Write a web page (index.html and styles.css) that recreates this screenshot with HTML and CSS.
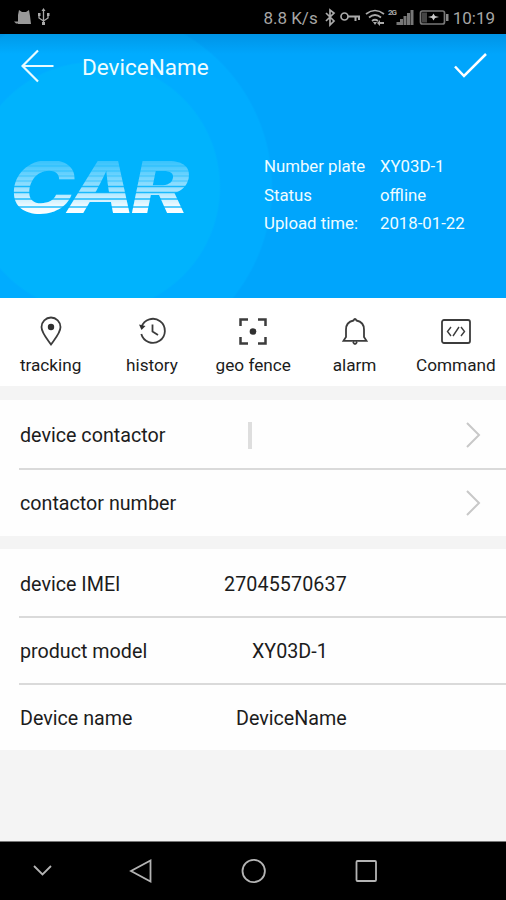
FILE: index.html
```html
<!DOCTYPE html>
<html lang="en">
<head>
<meta charset="utf-8">
<title>DeviceName</title>
<link rel="stylesheet" href="styles.css">
</head>
<body>
<div class="status">
  <svg class="status-left" width="38" height="20" viewBox="0 0 38 20">
    <path fill="#999" d="M4 17V8L5 3l3 2h4l3-2 1 6 1 8zM0 14.500h5v2H2z"/>
    <g fill="none" stroke="#aaa" stroke-width="1.3"><path d="M29.500 3v14M25 7v4l4.500 3 4.500-3V7"/></g>
    <path fill="#aaa" d="M27.500 4l2-3 2 3zM28 15h3v3h-3zM24 6h2.500v3H24zM33 6h2.500v3H33z"/>
  </svg>
  <span class="speed">8.8 K/s</span>
  <svg class="status-right" width="126" height="22" viewBox="0 0 126 22">
    <g fill="none" stroke="#aaa" stroke-width="1.700">
      <path d="M1 7l8 8-4 4V4l4 3-8 8"/>
      <circle cx="19.500" cy="10.500" r="3.500"/><path stroke-width="2" d="M23 10.500h12M30.500 11v4M34 11v3"/>
      <path d="M41 8q9-7 18 0M44 11.500q6-5 12 0M47 15q3-2.500 6 0"/>
    </g>
    <path fill="#aaa" d="M48 16h4l-2 3zM52 17l3-3v2h4v2h-4v2z"/>
    <text class="network" x="63" y="9" textLength="9">2G</text>
    <path fill="#777" d="M71.500 19v-3H75v3zM75 19v-6h3v6zM78.500 19v-9h3v9zM82 19V7h3v12zM85.500 19V4H88.500v15z"/>
    <rect x="95.500" y="5" width="24" height="13" rx="2" fill="none" stroke="#777" stroke-width="1.700"/>
    <path fill="#444" d="M97 6.500h5v10h-5z"/><path fill="#8a8a8a" d="M121 8h2.500v7H121z"/>
    <path fill="#ccc" d="M103 11l4-1 1.500-2.500 1.500 2.500 4 1-4 1-1.500 2.500-1.500-2.500z"/>
  </svg>
  <span class="clock">10:19</span>
</div>

<header class="hero">
  <div class="bar">
    <svg width="34" height="34" viewBox="0 0 34 34" fill="none" stroke="#e9fbff" stroke-width="2.200"><path d="M17 1.500L1.500 17 17 32.500M1.500 17H32.500"/></svg>
    <h1>DeviceName</h1>
    <svg width="34" height="28" viewBox="0 0 34 28" fill="none" stroke="#fff" stroke-width="2.500"><path d="M2 14.500l9 9.500L33 2"/></svg>
  </div>
  <div class="summary">
    <svg class="logo" width="180" height="54" viewBox="0 0 180 54">
      <defs>
        <linearGradient id="fade" gradientUnits="userSpaceOnUse" x1="0" y1="0" x2="0" y2="54">
          <stop offset="0" stop-color="#fff" stop-opacity=".22"/>
          <stop offset=".5" stop-color="#fff" stop-opacity=".6"/>
          <stop offset=".85" stop-color="#fff" stop-opacity=".95"/>
          <stop offset="1" stop-color="#fff"/>
        </linearGradient>
        <mask id="stripes" maskUnits="userSpaceOnUse" x="-4" y="0" width="188" height="54">
          <rect x="-4" width="188" height="54" fill="url(#fade)"/>
          <path stroke="#000" stroke-opacity=".5" stroke-width="1" d="M-4 5h188M-4 10h188M-4 15h188M-4 20h188"/>
          <path stroke="#000" stroke-opacity=".85" stroke-width="1.400" d="M-4 25.500h188M-4 31.500h188M-4 38h188M-4 46h188"/>
        </mask>
      </defs>
      <g mask="url(#stripes)"><text class="wordmark" x="-2" y="52" textLength="145" lengthAdjust="spacing" transform="scale(1.240 1)">CAR</text></g>
    </svg>
    <dl class="facts">
      <dt>Number plate</dt><dd>XY03D-1</dd>
      <dt>Status</dt><dd>offline</dd>
      <dt>Upload time:</dt><dd>2018-01-22</dd>
    </dl>
  </div>
</header>

<nav class="tabs">
  <div class="tab"><svg width="34" height="32" viewBox="0 0 34 32"><path d="M17 29.500C14 25 7.500 18 7.500 12a9.500 9.500 0 0 1 19 0c0 6-6.500 13-9.500 17.500z"/><circle class="solid" cx="17" cy="12" r="3.200"/></svg><span>tracking</span></div>
  <div class="tab"><svg width="34" height="32" viewBox="0 0 34 32"><path d="M6.500 12a12 12 0 1 1-.2 7M17.500 9.500V16.500l5.500 3.500"/><path class="solid" d="M4 9.500l6.500 1.500-4 4z"/></svg><span>history</span></div>
  <div class="tab"><svg width="34" height="32" viewBox="0 0 34 32"><path class="thick" d="M4.500 11V4.500H12M22 4.500h7.500V11M4.500 22v6.500H12M22 28.500h7.500V22"/><circle class="solid" cx="17" cy="16.500" r="3.300"/></svg><span>geo fence</span></div>
  <div class="tab"><svg width="34" height="32" viewBox="0 0 34 32"><path d="M15.500 5.500q1.500-3 3 0c4.500 1 7.500 4.500 7.500 9V22l2.500 3.800H5.500L8 22v-7.500c0-4.500 3-8 7.500-9zM15 27q2 4 4 0"/></svg><span>alarm</span></div>
  <div class="tab"><svg width="34" height="32" viewBox="0 0 34 32"><rect x="3" y="5" width="28" height="23" rx="2"/><path class="thin" d="M12 12l-3.500 4.500L12 21M22 12l3.500 4.500L22 21M20 12l-6 9"/></svg><span>Command</span></div>
</nav>

<section class="group">
  <div class="row tall"><span class="label">device contactor</span><span class="value"><i class="cursor"></i></span><svg class="chevron" width="16" height="26" viewBox="0 0 16 26"><path d="M2 1l12 12L2 25"/></svg></div>
  <div class="row tall"><span class="label">contactor number</span><span class="value"></span><svg class="chevron" width="16" height="26" viewBox="0 0 16 26"><path d="M2 1l12 12L2 25"/></svg></div>
</section>

<section class="group lower">
  <div class="row"><span class="label">device IMEI</span><span class="value imei">27045570637</span></div>
  <div class="row"><span class="label">product model</span><span class="value model">XY03D-1</span></div>
  <div class="row"><span class="label">Device name</span><span class="value name">DeviceName</span></div>
</section>

<footer class="keys">
  <svg width="506" height="58" viewBox="0 0 506 58" fill="none" stroke="#b4b4b4" stroke-width="1.800">
    <path d="M34 24l8.500 8.500L51 24M150.500 18.500v21L131 29z"/>
    <circle cx="253.700" cy="29" r="11.200"/>
    <rect x="356.500" y="19" width="19.500" height="20" rx="1"/>
  </svg>
</footer>
</body>
</html>
```

FILE: styles.css
```css
* { box-sizing: border-box; }
body {
  margin: 0;
  width: 506px;
  height: 900px;
  display: flex;
  flex-direction: column;
  background: #f4f4f4;
  color: #1c1c1c;
  font-family: Roboto, "Liberation Sans", sans-serif;
  overflow: hidden;
}
svg { display: block; flex: none; }

.status {
  height: 34px;
  flex: none;
  display: flex;
  align-items: center;
  padding: 0 11px 0 14px;
  background: #000;
  color: #a6a6a6;
  font-size: 17px;
}
.speed { margin-left: auto; margin-right: 7px; }
.clock { margin-left: 2px; }
.status span { padding-top: 2px; }
.network { font: bold 8px Roboto, sans-serif; fill: #aaa; }

.hero {
  height: 264px;
  flex: none;
  padding: 15px 19px 0 21px;
  color: #effcff;
  background:
    linear-gradient(rgba(0, 70, 130, .18), transparent 20px),
    radial-gradient(circle at 95px 153px, #00b3fd 124px, transparent 126px),
    radial-gradient(circle at 95px 153px, #00acff 176px, transparent 178px),
    #00a5fc;
}
.bar { display: flex; align-items: center; height: 34px; }
h1 { margin: 2px auto 0 27px; font-size: 22.500px; font-weight: 400; }
.summary { display: flex; margin: 68px 0 0 -9px; align-items: center; }
.logo { margin-top: -12px; overflow: visible; }
.wordmark { font: italic 800 71px Inter, sans-serif; fill: #fff; }
.facts {
  display: grid;
  grid-template-columns: 116px 110px;
  grid-auto-rows: 28.500px;
  align-items: center;
  margin: 1px 0 0 72px;
  font-size: 16.800px;
  white-space: nowrap;
}
.facts dd { margin: 0; }

.tabs {
  height: 88px;
  flex: none;
  display: grid;
  grid-template-columns: repeat(5, 101.300px);
  background: #fff;
}
.tab { display: flex; flex-direction: column; align-items: center; padding-top: 17px; font-size: 17.200px; white-space: nowrap; }
.tab span { margin-top: 7px; line-height: 22px; }
.tab svg { fill: none; stroke: #3c3c3c; stroke-width: 1.800; }
.tab .solid { fill: #303030; stroke: none; }
.tab .thick { stroke-width: 2.500; }
.tab .thin { stroke-width: 1.400; }

.group { margin-top: 14px; background: #fefefe; }
.group + .group { margin-top: 13px; }
.row { position: relative; height: 67px; display: flex; align-items: center; padding: 2px 25px 0 20px; font-size: 19.700px; }
.row.tall { height: 68px; }
.lower .row { padding-top: 4px; }
.row + .row::before { content: ""; position: absolute; top: 0; left: 19px; right: 0; height: 2px; background: #dadada; }
.label { width: 228px; }
.value { flex: 1; }
.cursor { display: block; width: 4px; height: 27px; background: #dedede; }
.imei { margin-left: -24px; letter-spacing: .1px; }
.model { margin-left: 4px; }
.name { margin-left: -12px; }
.chevron { fill: none; stroke: #c8c8c8; stroke-width: 2; }

.keys { height: 59px; margin-top: auto; flex: none; background: #000; border-top: 1px solid #777; }
```
